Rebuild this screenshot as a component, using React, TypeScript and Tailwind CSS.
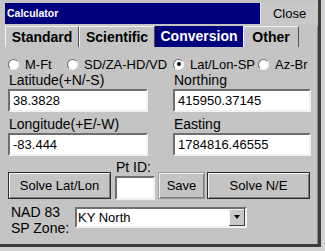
import React from 'react';

const TABS = [
  { label: 'Standard', w: 'w-[74px]' },
  { label: 'Scientific', w: 'w-[76px]' },
  { label: 'Conversion', w: 'w-[88px]', active: true },
  { label: 'Other', w: 'w-[56px]' },
];

const RADIOS = [
  { label: 'M-Ft', w: 'w-[59px]' },
  { label: 'SD/ZA-HD/VD', w: 'w-[106px]' },
  { label: 'Lat/Lon-SP', w: 'w-[85px]', checked: true },
  { label: 'Az-Br', w: 'w-[50px]' },
];

const sunken =
  'bg-white border-2 border-t-[#6f6f6f] border-l-[#6f6f6f] border-r-[#f2f2f2] border-b-[#f2f2f2]';

function Radio({ label, w, checked }: { label: string; w: string; checked?: boolean }) {
  return (
    <div className={`flex items-center ${w}`}>
      <div className="w-[11px] h-[11px] rounded-full bg-white border border-t-[#6a6a6a] border-l-[#6a6a6a] border-r-[#eeeeee] border-b-[#eeeeee] flex items-center justify-center">
        {checked && <div className="w-[4px] h-[4px] rounded-full bg-black" />}
      </div>
      <span className="ml-[6px] text-[13px] leading-[14px] mt-[2px]">{label}</span>
    </div>
  );
}

function Field({ label, value, w }: { label: string; value: string; w: string }) {
  return (
    <div className={`flex flex-col ${w}`}>
      <div className="h-[16px] leading-[16px] text-[14px] pl-[1px]">{label}</div>
      <div className={`h-[23px] mt-[1px] ${sunken} flex items-center pl-[3px] text-[13px]`}>
        {value}
      </div>
    </div>
  );
}

const btn =
  'h-[27px] bg-[#c4c4c4] border text-[13px] flex items-center justify-center shadow-[inset_1px_1px_0_#f4f4f4,inset_-1px_-1px_0_#7c7c7c]';

export default function App() {
  return (
    <div className="w-[325px] h-[251px] bg-[#d2d2d2] font-['Liberation_Sans',Arial,sans-serif] text-black overflow-hidden">
      <div className="w-[321px] h-[247px] bg-[#c4c4c4] border-r-[3px] border-b-[3px] border-[#3c3c3c] pl-[5px] pt-[3px] flex flex-col">
        {/* Title bar */}
        <div className="flex h-[21px]">
          <div className="flex-1 bg-[#00007f] text-white font-bold text-[10.5px] flex items-center pl-[2px]">
            Calculator
          </div>
          <button className="w-[58px] bg-[#c8c8c8] text-[13px] flex items-center justify-center border-l border-[#e6e6e6]">
            Close
          </button>
        </div>

        {/* Tabs */}
        <div className="flex h-[21px] mt-[2px] border-r border-[#8a8a8a]">
          {TABS.map(t => (
            <div
              key={t.label}
              className={`${t.w} h-full flex items-center justify-center font-bold text-[14px] ${
                t.active
                  ? 'bg-[#00007f] text-white'
                  : 'border-t border-l border-t-[#f2f2f2] border-l-[#f2f2f2] border-r border-r-[#505050]'
              }`}
            >
              {t.label}
            </div>
          ))}
        </div>

        {/* Body */}
        <div className="flex-1 border-r border-[#8a8a8a] pl-[3px]">
          <div className="flex h-[14px] mt-[10px]">
            {RADIOS.map(r => (
              <Radio key={r.label} {...r} />
            ))}
          </div>

          <div className="flex mt-[1px]">
            <div className="flex flex-col w-[140px]">
              <Field label="Latitude(+N/-S)" value="38.3828" w="w-[140px]" />
              <div className="mt-[4px]">
                <Field label="Longitude(+E/-W)" value="-83.444" w="w-[140px]" />
              </div>
            </div>
            <div className="flex flex-col w-[138px] ml-[25px]">
              <Field label="Northing" value="415950.37145" w="w-[138px]" />
              <div className="mt-[4px]">
                <Field label="Easting" value="1784816.46555" w="w-[138px]" />
              </div>
            </div>
          </div>

          {/* Buttons */}
          <div className="flex mt-[3px]">
            <button className={`${btn} w-[103px] mt-[13px] border-[#2c2c2c]`}>Solve Lat/Lon</button>
            <div className="flex flex-col w-[40px] ml-[4px]">
              <div className="h-[17px] leading-[16px] text-[14px] pl-[1px]">Pt ID:</div>
              <div className={`h-[24px] ${sunken}`} />
            </div>
            <button className={`${btn} w-[47px] ml-[3px] mt-[13px] border-[#9a9a9a]`}>Save</button>
            <button className={`${btn} w-[103px] ml-[2px] mt-[13px] border-[#2c2c2c]`}>Solve N/E</button>
          </div>

          {/* Zone */}
          <div className="flex mt-[4px]">
            <div className="w-[67px] pl-[3px] text-[14px] leading-[16px]">
              <div>NAD 83</div>
              <div>SP Zone:</div>
            </div>
            <div className={`w-[172px] h-[21px] mt-[3px] ${sunken} flex items-center`}>
              <span className="flex-1 pl-[1px] text-[13px]">KY North</span>
              <div className="w-[16px] h-full bg-[#c8c8c8] border-r border-b border-[#404040] shadow-[inset_1px_1px_0_#f4f4f4] flex items-center justify-center">
                <div className="w-0 h-0 border-l-[3px] border-r-[3px] border-t-[4px] border-l-transparent border-r-transparent border-t-black" />
              </div>
            </div>
          </div>
        </div>
      </div>
    </div>
  );
}
